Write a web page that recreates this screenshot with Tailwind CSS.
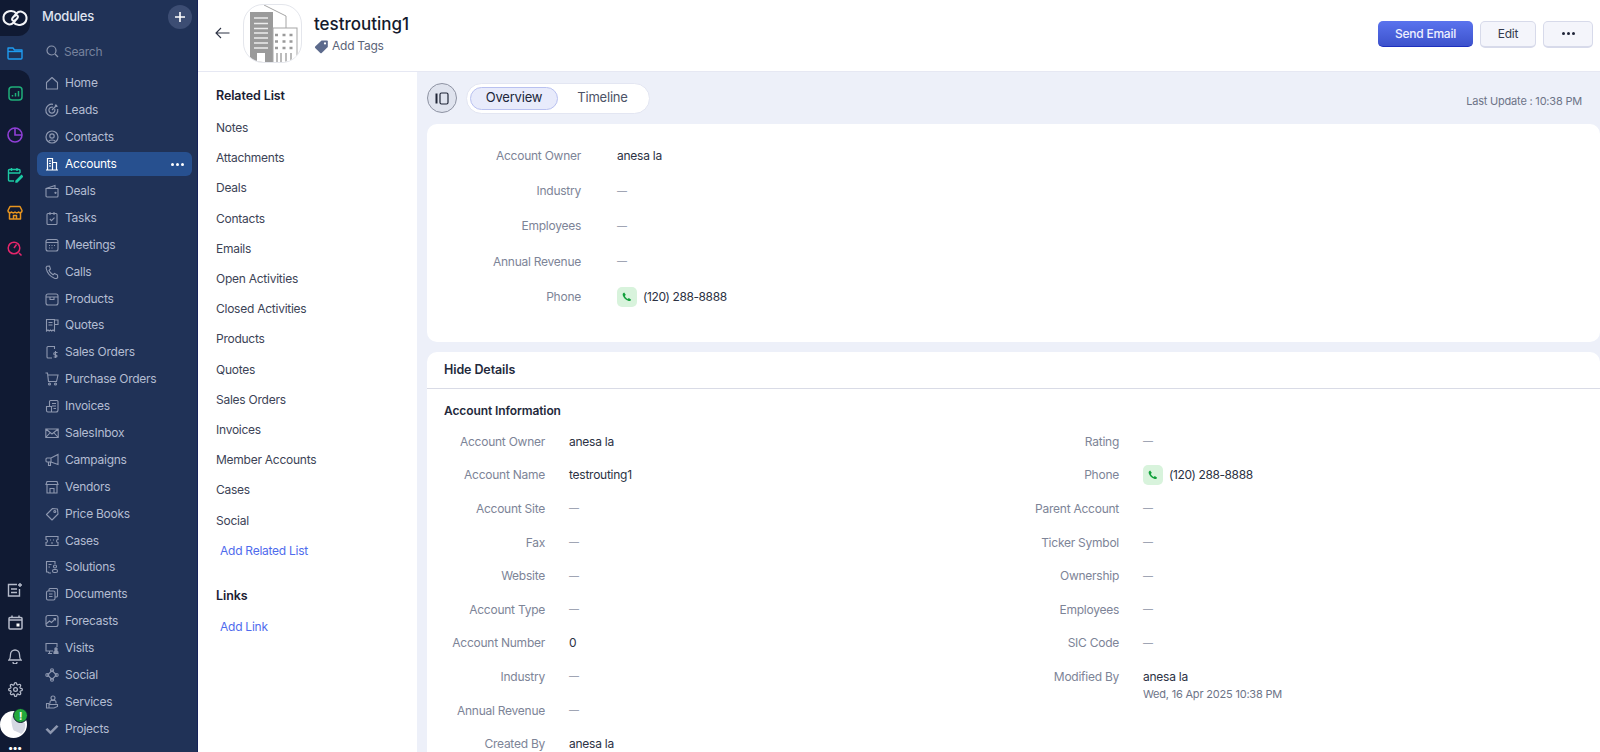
<!DOCTYPE html>
<html lang="en">
<head>
  <meta charset="UTF-8">
  <title>Accounts - testrouting1</title>
  <script src="https://cdn.jsdelivr.net/npm/@tailwindcss/browser@4"></script>
</head>
<body class="h-[752px] w-[1600px] overflow-hidden font-['Inter',sans-serif] text-[12px] tracking-[-0.25px] text-[#2c3244] bg-white">
  <div class="flex h-[752px]">

    <!-- icon rail -->
    <div class="w-[30px] shrink-0 bg-[#203257] flex flex-col">
      <div class="h-[36px] bg-[#101a33] rounded-br-xl flex items-center justify-center">
        <svg width="26" height="18" viewBox="0 0 26 18" fill="none" stroke="#f4f5f8" stroke-width="2"><path d="M14.500 4.500C11 .5 2.500 1.500 1.500 8c-.5 6.500 6.500 9.500 10 5.500l4-4.500c1.500-2-1-4-3-2"/><path d="M11.500 13.500c3.500 4 12 3 13-3.500.5-6.500-6.500-9.500-10-5.500l-4 4.500c-1.500 2 1 4 3 2"/></svg>
      </div>
      <div class="h-[34px] flex items-center justify-center">
        <svg width="16" height="16" viewBox="0 0 16 16" fill="none" stroke="#1e9bf0" stroke-width="1.400" stroke-linejoin="round"><path d="M1 13V3h5l1.500 2H15v8a1 1 0 0 1-1 1H2a1 1 0 0 1-1-1z"/><path d="M1 6.500h14"/></svg>
      </div>
      <div class="flex-1 bg-[#101a33] rounded-tr-xl flex flex-col items-center pt-[3px]">
        <div class="h-[41px] flex items-center justify-center">
          <svg width="15" height="15" viewBox="0 0 15 15" fill="none" stroke="#1fae7a" stroke-width="1.500"><rect x="1" y="1" width="13" height="13" rx="3"/><path d="M4.500 10.500V9M7.500 10.500V7M10.500 10.500V5"/></svg>
        </div>
        <div class="h-[41px] flex items-center justify-center">
          <svg width="16" height="16" viewBox="0 0 16 16" fill="none" stroke="#8f3fd6" stroke-width="1.600"><circle cx="8" cy="8" r="7"/><path d="M8 1v7h7"/></svg>
        </div>
        <div class="h-[40px] flex items-center justify-center">
          <svg width="16" height="16" viewBox="0 0 16 16" fill="none" stroke="#1cc9a4" stroke-width="1.400"><path d="M13 6V3.500a1 1 0 0 0-1-1H2.500a1 1 0 0 0-1 1V13a1 1 0 0 0 1 1H7M1.500 6H13M4.500 1v3M10 1v3"/><path d="M9 14l5.500-5.500 1 1L10 15H9z" fill="#1cc9a4"/></svg>
        </div>
        <div class="h-[36px] flex items-center justify-center">
          <svg width="16" height="16" viewBox="0 0 16 16" fill="none" stroke="#e8951f" stroke-width="1.500" stroke-linejoin="round"><path d="M3 1.500h10l2 4a2 2 0 0 1-3.500 1.500 2.500 2.500 0 0 1-3.500 0 2.500 2.500 0 0 1-3.500 0A2 2 0 0 1 1 5.500z"/><path d="M2.500 8v6h11V8M6.500 14v-3.500h3V14"/></svg>
        </div>
        <div class="h-[36px] flex items-center justify-center">
          <svg width="16" height="16" viewBox="0 0 16 16" fill="none" stroke="#e5266b" stroke-width="1.500"><circle cx="7" cy="7" r="5.800"/><path d="M7 7l2.500-3.500M12 12l2.500 2.500"/></svg>
        </div>

        <div class="mt-auto flex flex-col items-center relative">
          <div class="h-[33px] flex items-center justify-center">
            <svg width="16" height="16" viewBox="0 0 16 16" fill="none" stroke="#b6bccb" stroke-width="1.400"><path d="M10 2.500H1.500V14h11V7M4 7h6M4 10.500h6M13 1v4M11 3h4"/></svg>
          </div>
          <div class="h-[33px] flex items-center justify-center">
            <svg width="15" height="15" viewBox="0 0 15 15" fill="none" stroke="#b6bccb" stroke-width="1.500"><rect x="1" y="2.500" width="13" height="11.500" rx="1"/><path d="M4 .5v2M11 .5v2M1 5h13"/><rect x="8.500" y="8.500" width="3" height="3" fill="#fff" stroke="none"/></svg>
          </div>
          <div class="h-[33px] flex items-center justify-center">
            <svg width="14" height="16" viewBox="0 0 14 16" fill="none" stroke="#b6bccb" stroke-width="1.300"><path d="M1 12h12c-1.500-1.500-1.500-3-1.500-5.500a4.500 4.500 0 0 0-9 0C2.500 9 2.500 10.500 1 12zM5 14a2 2 0 0 0 4 0"/></svg>
          </div>
          <div class="h-[35px] flex items-center justify-center">
            <svg width="15" height="15" viewBox="0 0 24 24" fill="none" stroke="#b6bccb" stroke-width="2"><circle cx="12" cy="12" r="3"/><path d="M19.400 15a1.650 1.650 0 0 0 .33 1.820l.06.06a2 2 0 1 1-2.830 2.830l-.06-.06a1.650 1.650 0 0 0-2.800 1.170V21a2 2 0 1 1-4 0v-.09A1.650 1.650 0 0 0 7.300 19.700l-.06.06a2 2 0 1 1-2.830-2.830l.06-.06A1.650 1.650 0 0 0 3.300 14H3a2 2 0 1 1 0-4h.09A1.650 1.650 0 0 0 4.300 7.300l-.06-.06a2 2 0 1 1 2.830-2.830l.06.06A1.650 1.650 0 0 0 10 3.300V3a2 2 0 1 1 4 0v.09a1.650 1.650 0 0 0 2.800 1.170l.06-.06a2 2 0 1 1 2.830 2.830l-.06.06A1.650 1.650 0 0 0 20.900 10H21a2 2 0 1 1 0 4h-.09a1.650 1.650 0 0 0-1.510 1z"/></svg>
          </div>
          <div class="relative w-[27px] h-[27px] -ml-[3px] mt-[4px] mb-[4px]">
            <svg width="27" height="27" viewBox="0 0 27 27"><circle cx="13.500" cy="13.500" r="13.500" fill="#fff"/><path d="M13 3c5 4 8 9 12 9 1 5-1 9-4 11-3-3-7-2-8-5-1-4-3-10 0-15z" fill="#d5d8e2"/><path d="M9 4C4 7 3 17 9 24c-6-1-8-6-8-10S4 6 9 4z" fill="#fff"/></svg>
            <span class="absolute -top-[3px] -right-[1px] w-[15px] h-[15px] rounded-full bg-[#23a83c] border border-[#101a33] flex items-center justify-center text-white text-[10px] font-bold leading-none">!</span>
          </div>
          <div class="h-[10px] text-white text-[10px] leading-[10px] font-bold tracking-tight">•••</div>
        </div>
      </div>
    </div>

    <!-- modules sidebar -->
    <div class="w-[168px] shrink-0 bg-[#203257] border-r border-[#16235a]">
      <div class="h-[34px] flex items-center justify-between pl-[12px] pr-[5px]">
        <span class="text-[#dfe4f0] text-[13px] tracking-[-0.2px] font-medium">Modules</span>
        <span class="w-[24px] h-[24px] rounded-full bg-[#3c4d73] flex items-center justify-center">
          <svg width="12" height="12" viewBox="0 0 12 12" stroke="#fff" stroke-width="1.600"><path d="M6 1v10M1 6h10"/></svg>
        </span>
      </div>
      <div class="h-[35px] flex items-center pl-[16px] gap-[5px] text-[#77829d]">
        <svg width="13" height="13" viewBox="0 0 13 13" fill="none" stroke="#8b95ac" stroke-width="1.200"><circle cx="5.500" cy="5.500" r="4.500"/><path d="M9 9l3 3"/></svg>
        <span>Search</span>
      </div>
      <nav class="pl-[7px] pr-[5px] text-[#b4bdd2] mt-[1px]">
        <a class="h-[26.900px] flex items-center pl-[8px] gap-[6px]"><svg class="w-[14px] h-[14px] shrink-0" viewBox="0 0 14 14" fill="none" stroke="#8e98b0" stroke-width="1.100"><path d="M1.500 13V6.500L7 1.500l5.500 5V13z" stroke-linejoin="round"/></svg>Home</a>
        <a class="h-[26.900px] flex items-center pl-[8px] gap-[6px]"><svg class="w-[14px] h-[14px] shrink-0" viewBox="0 0 14 14" fill="none" stroke="#8e98b0" stroke-width="1.200"><path d="M8 1.300A6 6 0 1 0 12.700 6M8 4.300A3 3 0 1 0 9.700 6M7 7l5-5M10.500 1.500V3.500H12.500"/></svg>Leads</a>
        <a class="h-[26.900px] flex items-center pl-[8px] gap-[6px]"><svg class="w-[14px] h-[14px] shrink-0" viewBox="0 0 14 14" fill="none" stroke="#8e98b0" stroke-width="1.200"><circle cx="7" cy="7" r="6"/><circle cx="7" cy="6" r="2.200"/><path d="M3.500 11.500c1-2 6-2 7 0"/></svg>Contacts</a>
        <a class="h-[24px] my-[1.450px] flex items-center pl-[8px] gap-[6px] bg-[#27508f] rounded-md text-white"><svg class="w-[14px] h-[14px] shrink-0" viewBox="0 0 14 14" fill="none" stroke="#fff" stroke-width="1.200"><path d="M1 13h12M2.500 13V1.500h5V13M7.500 5.500h4V13M4 4h2M4 6.500h2M4 9h2"/></svg>Accounts<span class="ml-auto mr-[8px] flex gap-[2px]"><i class="w-[3px] h-[3px] rounded-full bg-white"></i><i class="w-[3px] h-[3px] rounded-full bg-white"></i><i class="w-[3px] h-[3px] rounded-full bg-white"></i></span></a>
        <a class="h-[26.900px] flex items-center pl-[8px] gap-[6px]"><svg class="w-[14px] h-[14px] shrink-0" viewBox="0 0 14 14" fill="none" stroke="#8e98b0" stroke-width="1.100"><path d="M1 4.500h11.500a.5.5 0 0 1 .5.5v7a1 1 0 0 1-1 1H2a1 1 0 0 1-1-1zM1 4.500l9-3v3"/><circle cx="10.500" cy="8.800" r=".6"/></svg>Deals</a>
        <a class="h-[26.900px] flex items-center pl-[8px] gap-[6px]"><svg class="w-[14px] h-[14px] shrink-0" viewBox="0 0 14 14" fill="none" stroke="#8e98b0" stroke-width="1.100"><rect x="2" y="2.500" width="10" height="11" rx="1"/><path d="M5 1v3M9 1v3M4.800 8l1.700 1.700 3-3"/></svg>Tasks</a>
        <a class="h-[26.900px] flex items-center pl-[8px] gap-[6px]"><svg class="w-[14px] h-[14px] shrink-0" viewBox="0 0 14 14" fill="none" stroke="#8e98b0" stroke-width="1.100"><rect x="1" y="1.500" width="12" height="11.500" rx="2"/><path d="M1 4.500h12M4 7.500h1M6.500 7.500h1M9 7.500h1M4 10h1M6.500 10h1"/></svg>Meetings</a>
        <a class="h-[26.900px] flex items-center pl-[8px] gap-[6px]"><svg class="w-[14px] h-[14px] shrink-0" viewBox="0 0 14 14" fill="none" stroke="#8e98b0" stroke-width="1.100"><path d="M2 1.200l2.500-.2 1 3-1.500 1.300c.7 1.800 2.200 3.500 4 4.500l1.500-1.300 3 1.500.2 2.500c-.5 1-2 1.200-3.200.8C5.500 11.500 2 7.500 1.200 3.500 1 2.500 1.300 1.700 2 1.200z"/></svg>Calls</a>
        <a class="h-[26.900px] flex items-center pl-[8px] gap-[6px]"><svg class="w-[14px] h-[14px] shrink-0" viewBox="0 0 14 14" fill="none" stroke="#8e98b0" stroke-width="1.100"><rect x="1" y="2" width="12" height="11" rx="2"/><path d="M1 5h12M5 5v2.500h4V5"/></svg>Products</a>
        <a class="h-[26.900px] flex items-center pl-[8px] gap-[6px]"><svg class="w-[14px] h-[14px] shrink-0" viewBox="0 0 14 14" fill="none" stroke="#8e98b0" stroke-width="1.100"><path d="M1.500 1.500h8v11.500l-1.500-1-1.300 1-1.200-1-1.300 1-1.200-1-1.500 1zM9.500 2H13v4.500H9.500M3.500 4.500h4M3.500 7h4"/></svg>Quotes</a>
        <a class="h-[26.900px] flex items-center pl-[8px] gap-[6px]"><svg class="w-[14px] h-[14px] shrink-0" viewBox="0 0 14 14" fill="none" stroke="#8e98b0" stroke-width="1.100"><path d="M9.500 4V1.500H3a1 1 0 0 0-1 1V12a1 1 0 0 0 1 1h4M10.500 6v7M12.500 7.500H10a1 1 0 0 0 0 2.500h1a1 1 0 0 1 0 2H8.700"/></svg>Sales Orders</a>
        <a class="h-[26.900px] flex items-center pl-[8px] gap-[6px]"><svg class="w-[14px] h-[14px] shrink-0" viewBox="0 0 14 14" fill="none" stroke="#8e98b0" stroke-width="1.100"><path d="M.5 1H2.500l1 8.500h8l1.500-6.500H2.800"/><circle cx="4.500" cy="12" r="1"/><circle cx="10.500" cy="12" r="1"/></svg>Purchase Orders</a>
        <a class="h-[26.900px] flex items-center pl-[8px] gap-[6px]"><svg class="w-[14px] h-[14px] shrink-0" viewBox="0 0 14 14" fill="none" stroke="#8e98b0" stroke-width="1.100"><path d="M4.500 7.500V2.500a1 1 0 0 1 1-1H12a1 1 0 0 1 1 1V11a2 2 0 0 1-2 2H3M1.500 7.500h5V13H3a1.500 1.500 0 0 1-1.500-1.500zM7 4.500h4M7 7h4M8.500 9.500H11"/></svg>Invoices</a>
        <a class="h-[26.900px] flex items-center pl-[8px] gap-[6px]"><svg class="w-[14px] h-[14px] shrink-0" viewBox="0 0 14 14" fill="none" stroke="#8e98b0" stroke-width="1.100"><path d="M.8 3h12.400v8.500H.8zM.8 3l6.200 5 6.200-5M.8 11.500l4-4.500M13.200 11.500l-4-4.500"/></svg>SalesInbox</a>
        <a class="h-[26.900px] flex items-center pl-[8px] gap-[6px]"><svg class="w-[14px] h-[14px] shrink-0" viewBox="0 0 14 14" fill="none" stroke="#8e98b0" stroke-width="1.100"><path d="M13 1.500v10L6 9H2a1 1 0 0 1-1-1V6a1 1 0 0 1 1-1h4zM6 5v4M3.500 9v3.500h2V9.200"/></svg>Campaigns</a>
        <a class="h-[26.900px] flex items-center pl-[8px] gap-[6px]"><svg class="w-[14px] h-[14px] shrink-0" viewBox="0 0 14 14" fill="none" stroke="#8e98b0" stroke-width="1.100"><path d="M1 4.500l1-3h10l1 3zM2 4.500V13h10V4.500M5 13V8.500h4V13"/></svg>Vendors</a>
        <a class="h-[26.900px] flex items-center pl-[8px] gap-[6px]"><svg class="w-[14px] h-[14px] shrink-0" viewBox="0 0 14 14" fill="none" stroke="#8e98b0" stroke-width="1.100"><path d="M7.500 1.500l5 .5.500 5-6 6-5.500-5.500z" stroke-linejoin="round"/><circle cx="9.800" cy="4.500" r="1"/></svg>Price Books</a>
        <a class="h-[26.900px] flex items-center pl-[8px] gap-[6px]"><svg class="w-[14px] h-[14px] shrink-0" viewBox="0 0 14 14" fill="none" stroke="#8e98b0" stroke-width="1.100"><path d="M1 2.500h12v3a1.500 1.500 0 0 0 0 3v3H1v-3a1.500 1.500 0 0 0 0-3zM5 6h1M8 6h1M6 9h2"/></svg>Cases</a>
        <a class="h-[26.900px] flex items-center pl-[8px] gap-[6px]"><svg class="w-[14px] h-[14px] shrink-0" viewBox="0 0 14 14" fill="none" stroke="#8e98b0" stroke-width="1.100"><path d="M6 13H4l-1-1H1.500V1.500h8.500V4M3.500 4.500h3M3.500 7h1.500"/><circle cx="10" cy="6.500" r="1.500"/><rect x="7.500" y="9.500" width="5" height="3" rx="1.500"/></svg>Solutions</a>
        <a class="h-[26.900px] flex items-center pl-[8px] gap-[6px]"><svg class="w-[14px] h-[14px] shrink-0" viewBox="0 0 14 14" fill="none" stroke="#8e98b0" stroke-width="1.100"><rect x="1.500" y="4" width="8.500" height="9" rx="1.500"/><path d="M4 4V2.500a1 1 0 0 1 1-1h6.500a1 1 0 0 1 1 1V9a1 1 0 0 1-1 1H10M4 7h3.500M4 9.500h3.500"/></svg>Documents</a>
        <a class="h-[26.900px] flex items-center pl-[8px] gap-[6px]"><svg class="w-[14px] h-[14px] shrink-0" viewBox="0 0 14 14" fill="none" stroke="#8e98b0" stroke-width="1.100"><rect x="1" y="1.500" width="12" height="11" rx="2"/><path d="M1 10l3.500-3 2 1.500 4-4M8.500 4.500h2v2"/></svg>Forecasts</a>
        <a class="h-[26.900px] flex items-center pl-[8px] gap-[6px]"><svg class="w-[14px] h-[14px] shrink-0" viewBox="0 0 14 14" fill="none" stroke="#8e98b0" stroke-width="1.100"><path d="M8 10H1V2.500h11V6M3 12.500h4M4.500 10v2.500"/><circle cx="11" cy="8" r="1.200" fill="#8e98b0"/><path d="M9 12.500v-1a1.500 1.500 0 0 1 4 0v1z" fill="#8e98b0"/></svg>Visits</a>
        <a class="h-[26.900px] flex items-center pl-[8px] gap-[6px]"><svg class="w-[14px] h-[14px] shrink-0" viewBox="0 0 14 14" fill="none" stroke="#8e98b0" stroke-width="1.100"><path d="M7 2.500L11.500 7 7 11.500 2.500 7z"/><circle cx="7" cy="2.300" r="1.500"/><circle cx="7" cy="11.700" r="1.500"/><circle cx="2.300" cy="7" r="1.500"/><circle cx="11.700" cy="7" r="1.500"/></svg>Social</a>
        <a class="h-[26.900px] flex items-center pl-[8px] gap-[6px]"><svg class="w-[14px] h-[14px] shrink-0" viewBox="0 0 14 14" fill="none" stroke="#8e98b0" stroke-width="1.100"><circle cx="8" cy="3" r="2"/><path d="M5 8.500V7a1.500 1.500 0 0 1 1.500-1.500h3A1.500 1.500 0 0 1 11 7v1.500M1.500 8.500h2.500v4.500H1.500zM4 9.500h8.500v2L9 13H4"/></svg>Services</a>
        <a class="h-[26.900px] flex items-center pl-[8px] gap-[6px]"><svg class="w-[14px] h-[14px] shrink-0" viewBox="0 0 14 14" fill="#8e98b0"><path d="M.5 7.500L2.500 6l3 3L11.500 3 13.500 4.500 5.500 12.500z"/></svg>Projects</a>
      </nav>
    </div>

    <!-- main column -->
    <div class="flex-1 min-w-0 flex flex-col">
      <!-- record header -->
      <div class="h-[72px] shrink-0 border-b border-[#e6e8f3] flex items-center pl-[17px] pr-[7px]">
        <svg width="15" height="12" viewBox="0 0 15 12" fill="none" stroke="#2c3244" stroke-width="1.100" class="shrink-0 mb-[5px]"><path d="M14.500 6H1M6 1L1 6l5 5"/></svg>
        <div class="w-[59px] h-[59px] ml-[13px] rounded-[20px] border border-[#e4e6ec] overflow-hidden shrink-0 mb-[4px]">
          <svg width="59" height="59" viewBox="0 0 59 59"><path d="M20 0l22 11v12" fill="none" stroke="#a5a5a5"/><rect x="6" y="7" width="23" height="52" fill="#9a9a9a"/><path d="M10 13h14M10 18.500h14M10 23.500h14M10 28h14M10 33h14M10 38h14M10 43h14" stroke="#ececec" stroke-width="1.500"/><rect x="13" y="48" width="8" height="11" fill="#fff"/><rect x="29" y="23" width="24" height="37" fill="#fff" stroke="#a5a5a5"/><path d="M31 30h3M38.500 30h3M45.500 30h3M31 36.500h3M38.500 36.500h3M45.500 36.500h3M31 43h3M38.500 43h3M45.500 43h3" stroke="#9a9a9a" stroke-width="2.500"/><path d="M33 48v11M37 48v11M42 48v11M47 48v11" stroke="#a5a5a5" stroke-width="1.500"/></svg>
        </div>
        <div class="ml-[12px] mb-[4px]">
          <div class="text-[17px] tracking-normal leading-[24px] font-medium text-[#141a2c]">testrouting1</div>
          <div class="flex items-center gap-[3px] mt-[1px] text-[#5b6478]">
            <svg width="15" height="15" viewBox="0 0 15 15" fill="#5c6a8c"><path d="M7.500 1.500H13a.8.8 0 0 1 .8.8V8L7.700 14a1 1 0 0 1-1.400 0L1.200 9a1 1 0 0 1 0-1.400z"/><circle cx="11" cy="4.400" r="1.100" fill="#fff"/></svg>
            Add Tags
          </div>
        </div>
        <div class="ml-auto flex items-center gap-[7px] mb-[3px]">
          <button class="w-[95px] h-[26px] rounded-[5px] bg-gradient-to-b from-[#5a73ee] to-[#3d52cc] border-b border-[#1d2fbe] text-[#eef0ff] font-medium">Send Email</button>
          <button class="w-[56px] h-[27px] rounded-[5px] bg-[#f4f5fb] border border-[#d7daea] border-b-2 text-[#333a4d]">Edit</button>
          <button class="w-[50px] h-[27px] rounded-[5px] bg-[#f4f5fb] border border-[#d7daea] border-b-2 flex items-center justify-center gap-[2px]"><i class="w-[3px] h-[3px] rounded-full bg-[#1e2438]"></i><i class="w-[3px] h-[3px] rounded-full bg-[#1e2438]"></i><i class="w-[3px] h-[3px] rounded-full bg-[#1e2438]"></i></button>
        </div>
      </div>

      <div class="flex-1 flex min-h-0">
        <!-- related list -->
        <div class="w-[219px] shrink-0 text-[#3c4356] pl-[18px]">
          <div class="pt-[15px] h-[41px] font-semibold text-[12.500px] tracking-[-0.1px] text-[#1a2033]">Related List</div>
          <div class="h-[30.200px] flex items-center">Notes</div>
          <div class="h-[30.200px] flex items-center">Attachments</div>
          <div class="h-[30.200px] flex items-center">Deals</div>
          <div class="h-[30.200px] flex items-center">Contacts</div>
          <div class="h-[30.200px] flex items-center">Emails</div>
          <div class="h-[30.200px] flex items-center">Open Activities</div>
          <div class="h-[30.200px] flex items-center">Closed Activities</div>
          <div class="h-[30.200px] flex items-center">Products</div>
          <div class="h-[30.200px] flex items-center">Quotes</div>
          <div class="h-[30.200px] flex items-center">Sales Orders</div>
          <div class="h-[30.200px] flex items-center">Invoices</div>
          <div class="h-[30.200px] flex items-center">Member Accounts</div>
          <div class="h-[30.200px] flex items-center">Cases</div>
          <div class="h-[30.200px] flex items-center">Social</div>
          <div class="h-[30.200px] flex items-center pl-[4px] text-[#4f6bed]">Add Related List</div>
          <div class="h-[46px] pt-[22px] font-semibold text-[12.500px] tracking-[-0.1px] leading-[16px] text-[#1a2033]">Links</div>
          <div class="h-[30.200px] flex items-center pl-[4px] text-[#4f6bed]">Add Link</div>
        </div>

        <!-- content -->
        <div class="flex-1 min-w-0 bg-[#edf0f9] pl-[10px] overflow-hidden">
          <div class="h-[52px] flex items-center">
            <span class="w-[30px] h-[30px] rounded-full bg-[#dfe3ee] border border-[#8e93a3] flex items-center justify-center">
              <svg width="14" height="13" viewBox="0 0 14 13" fill="none" stroke="#1f2536" stroke-width="1.200"><rect x="5" y="1" width="8" height="11" rx="1.500"/><path d="M1.500 1.500v10" stroke-width="2"/></svg>
            </span>
            <div class="ml-[9px] w-[184px] h-[31px] rounded-full bg-white border border-[#e3e6f2] flex items-center pl-[3px] text-[13px] tracking-[-0.2px]">
              <span class="w-[88px] h-[23px] rounded-full bg-[#e8ebfb] border border-[#b9c1f0] flex items-center justify-center text-[#20263a]">Overview</span>
              <span class="flex-1 text-center text-[#4c5367] pr-[2px]">Timeline</span>
            </div>
            <span class="ml-auto mr-[18px] mt-[7px] text-[11px] tracking-[-0.2px] text-[#6d7488]">Last Update : 10:38 PM</span>
          </div>

          <div class="bg-white rounded-[10px] h-[218px] pt-[14px]">
            <div class="grid grid-cols-[154px_1fr] gap-x-[36px] auto-rows-[35.400px] items-center">
              <span class="text-right text-[#7d8497]">Account Owner</span><span>anesa la</span>
              <span class="text-right text-[#7d8497]">Industry</span><span class="text-[10px] text-[#8b91a3]">—</span>
              <span class="text-right text-[#7d8497]">Employees</span><span class="text-[10px] text-[#8b91a3]">—</span>
              <span class="text-right text-[#7d8497]">Annual Revenue</span><span class="text-[10px] text-[#8b91a3]">—</span>
              <span class="text-right text-[#7d8497]">Phone</span>
              <span class="flex items-center gap-[6px] tracking-[-0.4px]"><span class="w-[20px] h-[20px] rounded-[5px] bg-[#d8f3dc] flex items-center justify-center"><svg width="10" height="10" viewBox="0 0 14 14" fill="#12a13c"><path d="M3 .8l2.300 3-1.300 1.700c.8 1.800 2.300 3.300 4 4.200l1.600-1.300 3.200 2.300c-.5 1.500-2 2.300-3.500 1.800C5 11.500 2 8 1 4.500.7 3 1.500 1.300 3 .8z"/></svg></span>(120) 288-8888</span>
            </div>
          </div>

          <div class="bg-white rounded-t-[10px] mt-[10px] h-[420px]">
            <div class="h-[37px] border-b border-[#d9dbe6] flex items-center pl-[17px] font-semibold text-[#23293b] text-[12.500px] tracking-[-0.1px]">Hide Details</div>
            <div class="pl-[17px] pt-[14px] h-[36px] font-semibold text-[#23293b] tracking-[-0.1px] leading-[16px]">Account Information</div>
            <div class="flex">
              <div class="w-[580px] grid grid-cols-[118px_1fr] gap-x-[24px] auto-rows-[33.600px] items-center">
                <span class="text-right text-[#7d8497]">Account Owner</span><span>anesa la</span>
                <span class="text-right text-[#7d8497]">Account Name</span><span>testrouting1</span>
                <span class="text-right text-[#7d8497]">Account Site</span><span class="text-[10px] text-[#8b91a3]">—</span>
                <span class="text-right text-[#7d8497]">Fax</span><span class="text-[10px] text-[#8b91a3]">—</span>
                <span class="text-right text-[#7d8497]">Website</span><span class="text-[10px] text-[#8b91a3]">—</span>
                <span class="text-right text-[#7d8497]">Account Type</span><span class="text-[10px] text-[#8b91a3]">—</span>
                <span class="text-right text-[#7d8497]">Account Number</span><span>0</span>
                <span class="text-right text-[#7d8497]">Industry</span><span class="text-[10px] text-[#8b91a3]">—</span>
                <span class="text-right text-[#7d8497]">Annual Revenue</span><span class="text-[10px] text-[#8b91a3]">—</span>
                <span class="text-right text-[#7d8497]">Created By</span><span>anesa la</span>
              </div>
              <div class="flex-1 grid grid-cols-[112px_1fr] gap-x-[24px] auto-rows-[33.600px] items-center content-start">
                <span class="text-right text-[#7d8497]">Rating</span><span class="text-[10px] text-[#8b91a3]">—</span>
                <span class="text-right text-[#7d8497]">Phone</span>
                <span class="flex items-center gap-[6px] tracking-[-0.4px]"><span class="w-[20px] h-[20px] rounded-[5px] bg-[#d8f3dc] flex items-center justify-center"><svg width="10" height="10" viewBox="0 0 14 14" fill="#12a13c"><path d="M3 .8l2.300 3-1.300 1.700c.8 1.800 2.300 3.300 4 4.200l1.600-1.300 3.200 2.300c-.5 1.500-2 2.300-3.500 1.800C5 11.500 2 8 1 4.500.7 3 1.500 1.300 3 .8z"/></svg></span>(120) 288-8888</span>
                <span class="text-right text-[#7d8497]">Parent Account</span><span class="text-[10px] text-[#8b91a3]">—</span>
                <span class="text-right text-[#7d8497]">Ticker Symbol</span><span class="text-[10px] text-[#8b91a3]">—</span>
                <span class="text-right text-[#7d8497]">Ownership</span><span class="text-[10px] text-[#8b91a3]">—</span>
                <span class="text-right text-[#7d8497]">Employees</span><span class="text-[10px] text-[#8b91a3]">—</span>
                <span class="text-right text-[#7d8497]">SIC Code</span><span class="text-[10px] text-[#8b91a3]">—</span>
                <span class="text-right text-[#7d8497]">Modified By</span>
                <span class="relative">anesa la<span class="absolute left-0 top-[18px] text-[11px] tracking-[-0.2px] text-[#6d7488] whitespace-nowrap">Wed, 16 Apr 2025 10:38 PM</span></span>
              </div>
            </div>
          </div>
        </div>
      </div>
    </div>
  </div>
</body>
</html>
